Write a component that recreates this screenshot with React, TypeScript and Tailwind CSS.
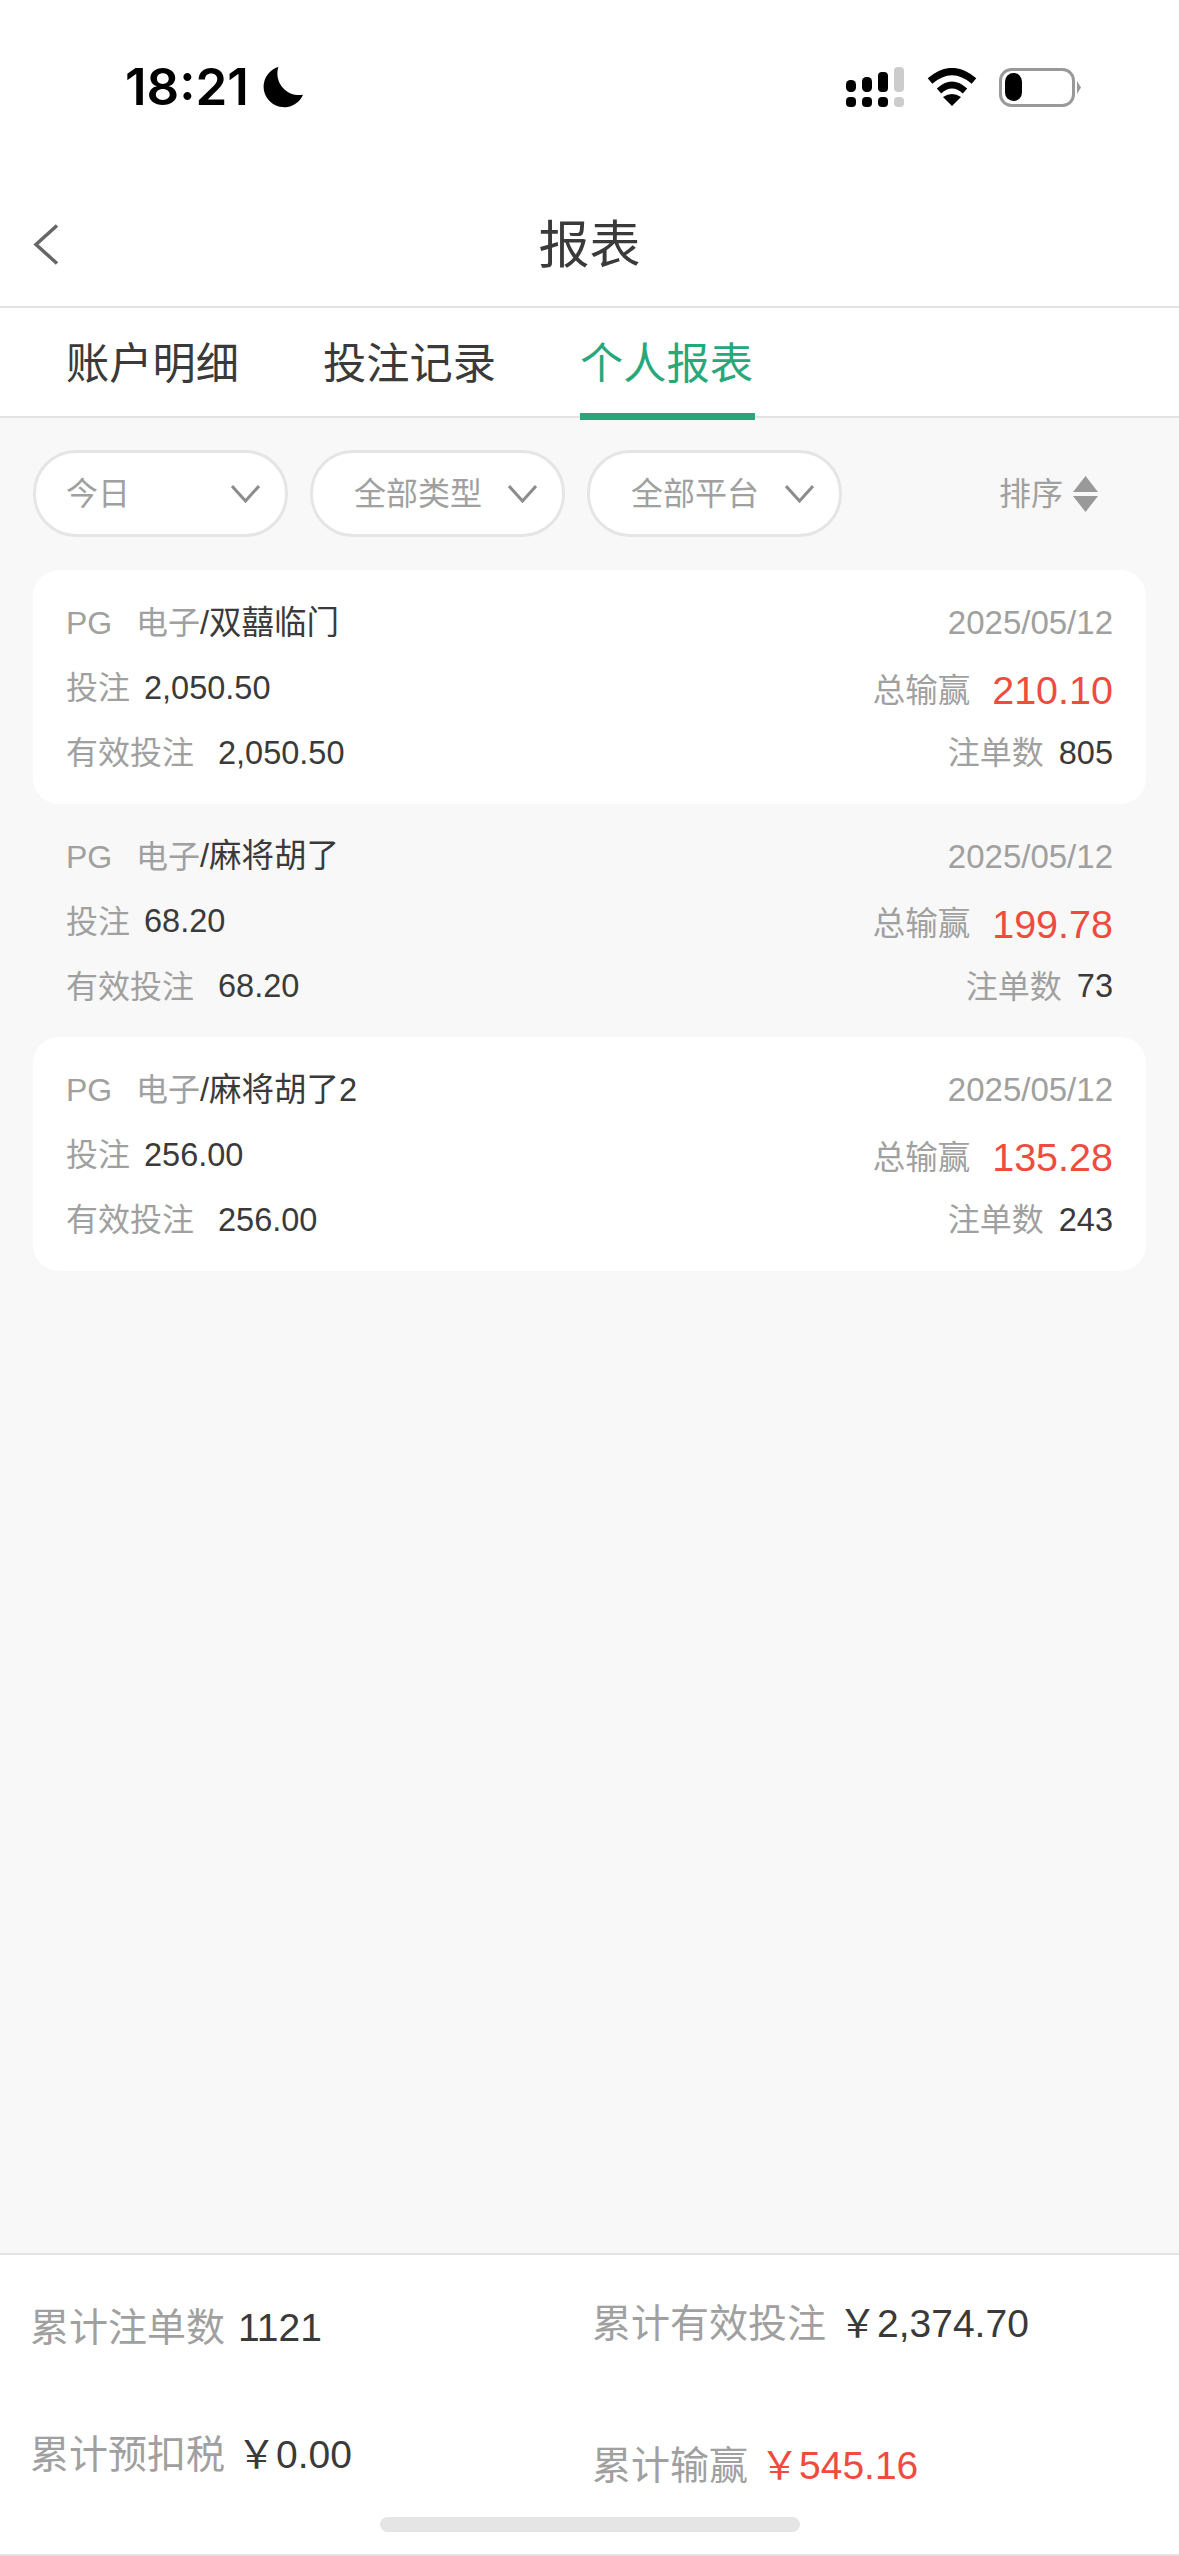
import React from "react";

type ReportRow = {
  game: string;
  date: string;
  bet: string;
  winLoss: string;
  validBet: string;
  orders: string;
};

const YEN = "\uFFE5";

const rows: ReportRow[] = [
  { game: "双囍临门", date: "2025/05/12", bet: "2,050.50", winLoss: "210.10", validBet: "2,050.50", orders: "805" },
  { game: "麻将胡了", date: "2025/05/12", bet: "68.20", winLoss: "199.78", validBet: "68.20", orders: "73" },
  { game: "麻将胡了2", date: "2025/05/12", bet: "256.00", winLoss: "135.28", validBet: "256.00", orders: "243" },
];

const SignalIcon = () => (
  <svg width="58" height="40" viewBox="0 0 58 40">
    <rect x="0" y="13" width="10" height="12" rx="4.5" fill="#000" />
    <rect x="16" y="10" width="10" height="15" rx="4.5" fill="#000" />
    <rect x="32" y="5" width="10" height="20" rx="4" fill="#000" />
    <rect x="48" y="0" width="10" height="25" rx="4" fill="#ccc" />
    <rect x="0" y="30" width="10" height="10" rx="4" fill="#000" />
    <rect x="16" y="30" width="10" height="10" rx="4" fill="#000" />
    <rect x="32" y="30" width="10" height="10" rx="4" fill="#000" />
    <rect x="48" y="30" width="10" height="10" rx="4" fill="#ccc" />
  </svg>
);

const WifiIcon = () => (
  <svg width="50" height="38" viewBox="0 0 50 38" fill="none" stroke="#000">
    <path d="M3 13 Q25 -6 47 13" strokeWidth="7" />
    <path d="M12 23 Q25 11 38 23" strokeWidth="6.5" />
    <path d="M16 29 Q25 23 34 29 L25 38 Z" fill="#000" stroke="none" />
  </svg>
);

const BatteryIcon = () => (
  <svg width="82" height="39" viewBox="0 0 82 39">
    <rect x="1.5" y="1.5" width="73" height="36" rx="11" fill="none" stroke="#999" strokeWidth="3" />
    <rect x="6" y="5" width="17" height="28" rx="8.5" fill="#000" />
    <path d="M78 13 L82 19.5 L78 26 Z" fill="#999" />
  </svg>
);

const Chevron = () => (
  <svg width="29" height="18" viewBox="0 0 29 18" fill="none" stroke="#8c8c8c" strokeWidth="3">
    <path d="M1 1 L14.5 16 L28 1" />
  </svg>
);

const Filter = ({ label, textClass }: { label: string; textClass: string }) => (
  <div className={`flex h-[87px] w-[255px] shrink-0 items-center justify-between rounded-[43px] border-[3px] border-[#e5e5e5] bg-white pr-[25px] ${textClass}`}>
    <span className="text-[32px] text-[#a0a0a0]">{label}</span>
    <Chevron />
  </div>
);

const Label = ({ children }: { children: React.ReactNode }) => (
  <span className="text-[32px] text-[#a0a0a0]">{children}</span>
);

const Value = ({ children }: { children: React.ReactNode }) => (
  <span className="text-[32.5px] text-[#3a3a3a]">{children}</span>
);

const ReportCard = ({ row, filled }: { row: ReportRow; filled: boolean }) => (
  <div className={`flex h-[233.5px] flex-col gap-[15px] rounded-[26px] px-[33px] pt-[28px] ${filled ? "bg-white" : ""}`}>
    <div className="flex h-[50px] items-center justify-between">
      <div className="flex items-center">
        <span className="w-[70px] text-[32px] text-[#a0a0a0]">PG</span>
        <span className="text-[32px] text-[#a0a0a0]">电子</span>
        <span className="text-[32.5px] text-[#3a3a3a]">/{row.game}</span>
      </div>
      <span className="text-[33px] text-[#a0a0a0]">{row.date}</span>
    </div>
    <div className="flex h-[50px] items-center justify-between">
      <div className="flex items-center gap-[14px]">
        <Label>投注</Label>
        <Value>{row.bet}</Value>
      </div>
      <div className="flex items-center gap-[22px] pt-[6px]">
        <span className="text-[32.5px] text-[#a0a0a0]">总输赢</span>
        <span className="text-[39.5px] text-[#ef4b3f]">{row.winLoss}</span>
      </div>
    </div>
    <div className="flex h-[50px] items-center justify-between">
      <div className="flex items-center gap-[24px]">
        <Label>有效投注</Label>
        <Value>{row.validBet}</Value>
      </div>
      <div className="flex items-center gap-[15px]">
        <Label>注单数</Label>
        <Value>{row.orders}</Value>
      </div>
    </div>
  </div>
);

const Total = ({ label, value, gap, red }: { label: string; value: string; gap: string; red?: boolean }) => (
  <div className={`flex h-[60px] items-center ${gap}`}>
    <span className="text-[39px] text-[#a0a0a0]">{label}</span>
    <span className={`text-[39px] ${red ? "text-[#ef4b3f]" : "text-[#3a3a3a]"}`}>{value}</span>
  </div>
);

export default function App() {
  return (
    <div className="relative flex h-[2556px] w-[1179px] flex-col overflow-hidden bg-[#f8f8f8] font-['Liberation_Sans','Noto_Sans_CJK_SC',sans-serif]">
      {/* status bar */}
      <div className="flex h-[181px] justify-between bg-white pt-[67px] pl-[125px] pr-[98px]">
        <div className="flex h-[40px] items-center gap-[13px]">
          <span className="font-['Inter',sans-serif] text-[51px] font-semibold text-black">18:21</span>
          <svg width="41" height="41" viewBox="0 0 40 40">
            <path d="M16 0 A20 20 0 1 0 40 27 A21 21 0 0 1 16 0 Z" fill="#000" />
          </svg>
        </div>
        <div className="flex h-[40px] items-center">
          <SignalIcon />
          <div className="ml-[23px]">
            <WifiIcon />
          </div>
          <div className="ml-[22px]">
            <BatteryIcon />
          </div>
        </div>
      </div>

      {/* nav bar */}
      <div className="relative flex h-[127px] items-center justify-center border-b-2 border-[#e3e3e3] bg-white">
        <button className="absolute left-[33px] top-[43px]">
          <svg width="26" height="41" viewBox="0 0 26 41" fill="none" stroke="#666" strokeWidth="3.5">
            <path d="M24 1.5 L3 20.5 L24 39.5" />
          </svg>
        </button>
        <span className="pt-[5px] text-[51px] text-[#3a3a3a]">报表</span>
      </div>

      {/* tabs */}
      <div className="flex h-[110px] gap-[84px] border-b-2 border-[#e3e3e3] bg-white pl-[66px]">
        <div className="flex items-center pt-[4px] text-[43.25px] text-[#3a3a3a]">账户明细</div>
        <div className="flex items-center pt-[4px] text-[43.25px] text-[#3a3a3a]">投注记录</div>
        <div className="relative flex items-center pt-[4px] text-[43.25px] text-[#27a77a]">
          个人报表
          <div className="absolute -bottom-[4px] left-0 h-[7px] w-[175px] bg-[#27a77a]" />
        </div>
      </div>

      {/* filters and list */}
      <div className="flex flex-1 flex-col">
        <div className="flex items-center gap-[22px] pl-[33px] pr-[81px] pt-[32px]">
          <Filter label="今日" textClass="pl-[30px]" />
          <Filter label="全部类型" textClass="pl-[41px]" />
          <Filter label="全部平台" textClass="pl-[41px]" />
          <div className="ml-auto flex items-center gap-[10px]">
            <span className="text-[32px] text-[#a0a0a0]">排序</span>
            <svg width="25" height="36" viewBox="0 0 25 36" fill="#999">
              <path d="M12.5 0 L25 16 L0 16 Z" />
              <path d="M0 20 L25 20 L12.5 36 Z" />
            </svg>
          </div>
        </div>
        <div className="mt-[33px] flex flex-col px-[33px]">
          {rows.map((row, i) => (
            <ReportCard key={row.game} row={row} filled={i % 2 === 0} />
          ))}
        </div>
      </div>

      {/* totals */}
      <div className="flex h-[303px] border-y-2 border-[#e3e3e3] bg-white">
        <div className="flex w-[592px] flex-col gap-[67px] pl-[30px] pt-[43px]">
          <Total label="累计注单数" value="1121" gap="gap-[13px]" />
          <Total label="累计预扣税" value={`${YEN}0.00`} gap="gap-[12px]" />
        </div>
        <div className="flex flex-col gap-[82px] pt-[39px]">
          <Total label="累计有效投注" value={`${YEN}2,374.70`} gap="gap-[12px]" />
          <Total label="累计输赢" value={`${YEN}545.16`} red gap="gap-[12px]" />
        </div>
      </div>

      {/* home indicator */}
      <div className="absolute bottom-[24px] left-[380px] h-[15px] w-[420px] rounded-full bg-[#e5e5e5]" />
    </div>
  );
}
